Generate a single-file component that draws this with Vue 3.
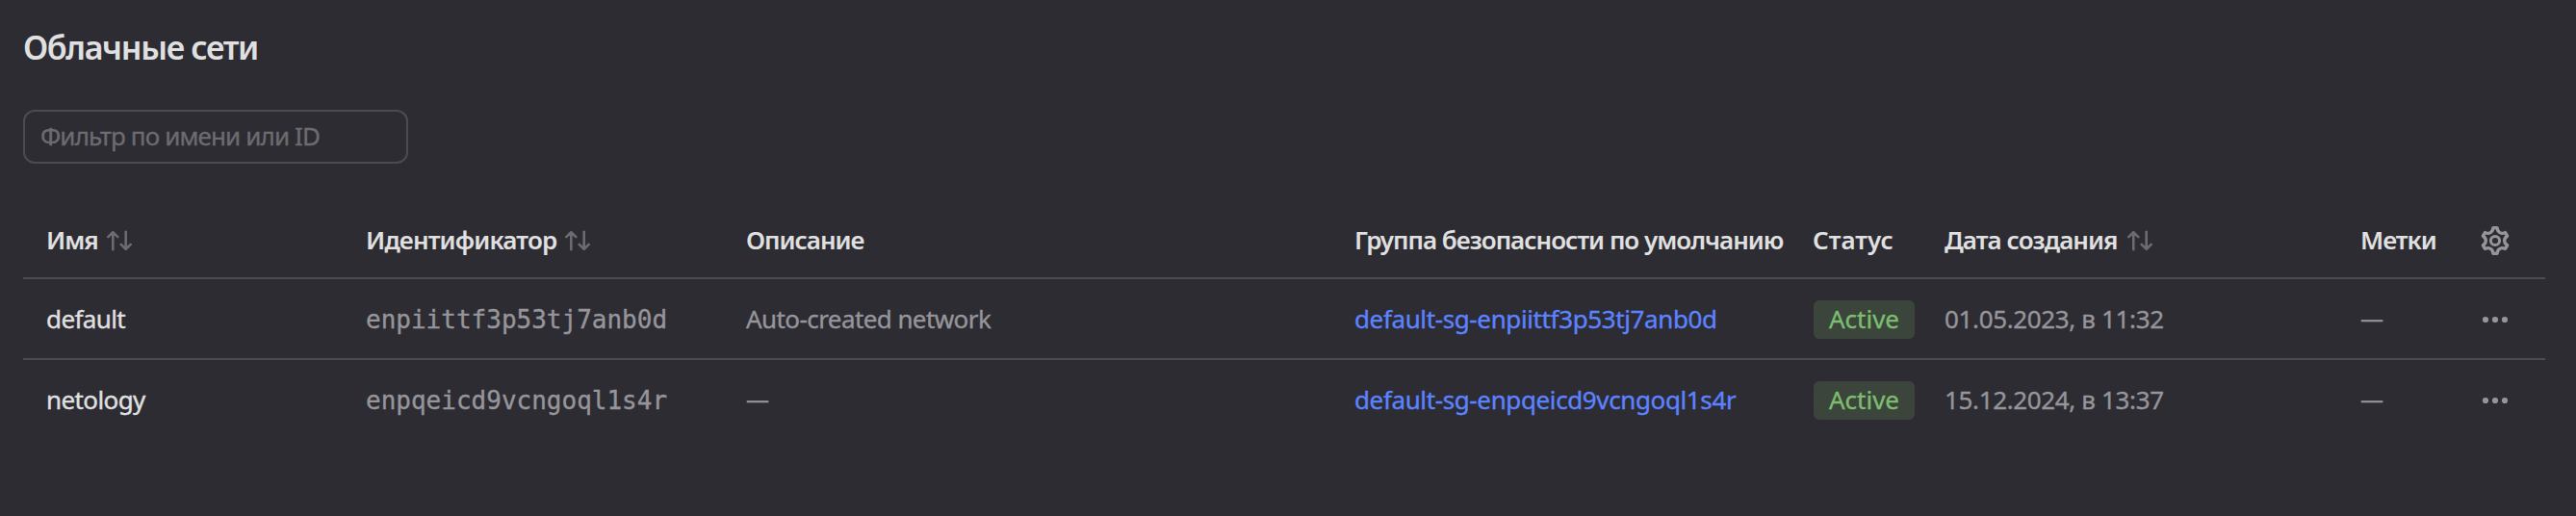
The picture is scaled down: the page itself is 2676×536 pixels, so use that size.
<script setup>
const columns = [
  { key: 'name', title: 'Имя', sortable: true },
  { key: 'ident', title: 'Идентификатор', sortable: true },
  { key: 'descr', title: 'Описание' },
  { key: 'group', title: 'Группа безопасности по умолчанию' },
  { key: 'status', title: 'Статус' },
  { key: 'created', title: 'Дата создания', sortable: true },
  { key: 'labels', title: 'Метки' },
]

const networks = [
  { name: 'default', id: 'enpiittf3p53tj7anb0d', descr: 'Auto-created network', status: 'Active', created: '01.05.2023, в 11:32' },
  { name: 'netology', id: 'enpqeicd9vcngoql1s4r', descr: '', status: 'Active', created: '15.12.2024, в 13:37' },
]
</script>

<template>
  <main class="page">
    <h1 class="title">Облачные сети</h1>
    <input class="filter" type="text" placeholder="Фильтр по имени или ID" />

    <div class="table">
      <div class="row head">
        <div v-for="col in columns" :key="col.key" class="th" :class="'th-' + col.key">
          <span>{{ col.title }}</span>
          <svg v-if="col.sortable" class="sort" viewBox="0 0 26 22">
            <path d="M6.3 20.2V2.2M1.3 7.2l5-5 5 5M19.7 1.8v18M14.7 14.8l5 5 5-5" />
          </svg>
        </div>
        <svg class="gear" viewBox="0 0 16 16">
          <path
            transform="translate(8 8) scale(1.115) translate(-8 -8)"
            d="M7.2 2H8.8a.2.2 0 0 1 .2.2c0 1.808 1.958 2.939 3.524 2.034a.2.2 0 0 1 .271.073l.802 1.388a.2.2 0 0 1-.073.272c-1.566.904-1.566 3.164 0 4.069a.2.2 0 0 1 .073.271l-.801 1.388a.2.2 0 0 1-.272.073C10.958 10.863 9 11.993 9 13.8a.2.2 0 0 1-.2.2H7.2a.2.2 0 0 1-.2-.2c0-1.808-1.958-2.938-3.524-2.034a.2.2 0 0 1-.272-.073l-.8-1.388a.2.2 0 0 1 .072-.271c1.566-.905 1.566-3.165 0-4.07a.2.2 0 0 1-.073-.271l.801-1.388a.2.2 0 0 1 .272-.073C5.042 5.138 7 4.007 7 2.2a.2.2 0 0 1 .2-.2Z"
          />
          <circle cx="8" cy="8" r="2.3" />
        </svg>
      </div>

      <div v-for="net in networks" :key="net.id" class="row">
        <div class="name">{{ net.name }}</div>
        <div class="ident">{{ net.id }}</div>
        <div class="descr">
          <template v-if="net.descr">{{ net.descr }}</template>
          <span v-else class="dash">—</span>
        </div>
        <div><a class="group">default-sg-{{ net.id }}</a></div>
        <div><span class="badge">{{ net.status }}</span></div>
        <div class="created">{{ net.created }}</div>
        <div><span class="dash">—</span></div>
        <svg class="dots" viewBox="0 0 32 32">
          <circle cx="6" cy="16" r="3.1" />
          <circle cx="16" cy="16" r="3.1" />
          <circle cx="26" cy="16" r="3.1" />
        </svg>
      </div>
    </div>
  </main>
</template>

<style>
html,
body {
  background: #2d2c33;
}
</style>

<style scoped>
.page {
  box-sizing: border-box;
  height: 536px;
  padding: 29px 32px 0 24px;
  background: #2d2c33;
  color: #e0e0e0;
  font-family: 'Noto Sans', 'Open Sans', sans-serif;
  font-size: 26px;
  line-height: 36px;
  white-space: nowrap;
}

.title {
  margin: 0;
  font-size: 34px;
  line-height: 40px;
  font-weight: 600;
  letter-spacing: -1.36px;
}

.filter {
  display: block;
  box-sizing: border-box;
  width: 400px;
  height: 56px;
  margin-top: 45px;
  padding: 0 16px 2px;
  border: 2px solid #4c4b51;
  border-radius: 12px;
  background: transparent;
  color: #e0e0e0;
  font: inherit;
  letter-spacing: -0.87px;
  -webkit-text-stroke: 0.35px;
}

.filter::placeholder {
  color: #6c6b70;
  opacity: 1;
}

.table {
  width: 2620px;
  margin-top: 40px;
}

.row {
  display: grid;
  grid-template-columns: 332px 395px 632px 477px 136px 432px 124px 32px;
  align-items: center;
  box-sizing: border-box;
  height: 84px;
  padding-left: 24px;
  padding-bottom: 2px;
  color: #969599;
  -webkit-text-stroke: 0.35px;
}

.row:not(:last-child) {
  padding-bottom: 0;
  border-bottom: 2px solid #4c4b51;
}

.row.head {
  height: 80px;
  color: #e0e0e0;
  font-weight: 600;
  -webkit-text-stroke: 0;
}

.th {
  display: flex;
  align-items: center;
  gap: 9px;
  letter-spacing: -1px;
}

.th-name {
  letter-spacing: -1px;
}

.th-ident {
  letter-spacing: -0.83px;
}

.th-status {
  margin-left: -1px;
  letter-spacing: 0;
}

.th-created {
  gap: 10px;
  letter-spacing: -0.93px;
}

.sort {
  width: 26px;
  height: 22px;
  margin-top: 2px;
  fill: none;
  stroke: #6c6b70;
  stroke-width: 2.6;
  stroke-linecap: round;
  stroke-linejoin: round;
}

.gear {
  width: 32px;
  height: 32px;
  margin-top: 2px;
  fill: none;
  stroke: #969599;
  stroke-width: 1.5;
  stroke-linejoin: round;
}

.name {
  color: #e0e0e0;
  letter-spacing: -0.6px;
}

.ident {
  padding-top: 2px;
  font-family: 'DejaVu Sans Mono', monospace;
}

.descr {
  letter-spacing: -0.58px;
}

.group {
  color: #5c83ff;
  letter-spacing: -0.38px;
}

.badge {
  display: block;
  box-sizing: border-box;
  width: 105px;
  height: 40px;
  margin-top: 2px;
  border-radius: 6px;
  background: #3b453b;
  color: #7cbd70;
  line-height: 38px;
  text-align: center;
}

.created {
  letter-spacing: -0.36px;
}

.dash {
  display: block;
  margin-top: -2px;
  font-size: 24px;
}

.dots {
  width: 32px;
  height: 32px;
  margin-top: 2px;
  fill: #969599;
}
</style>
